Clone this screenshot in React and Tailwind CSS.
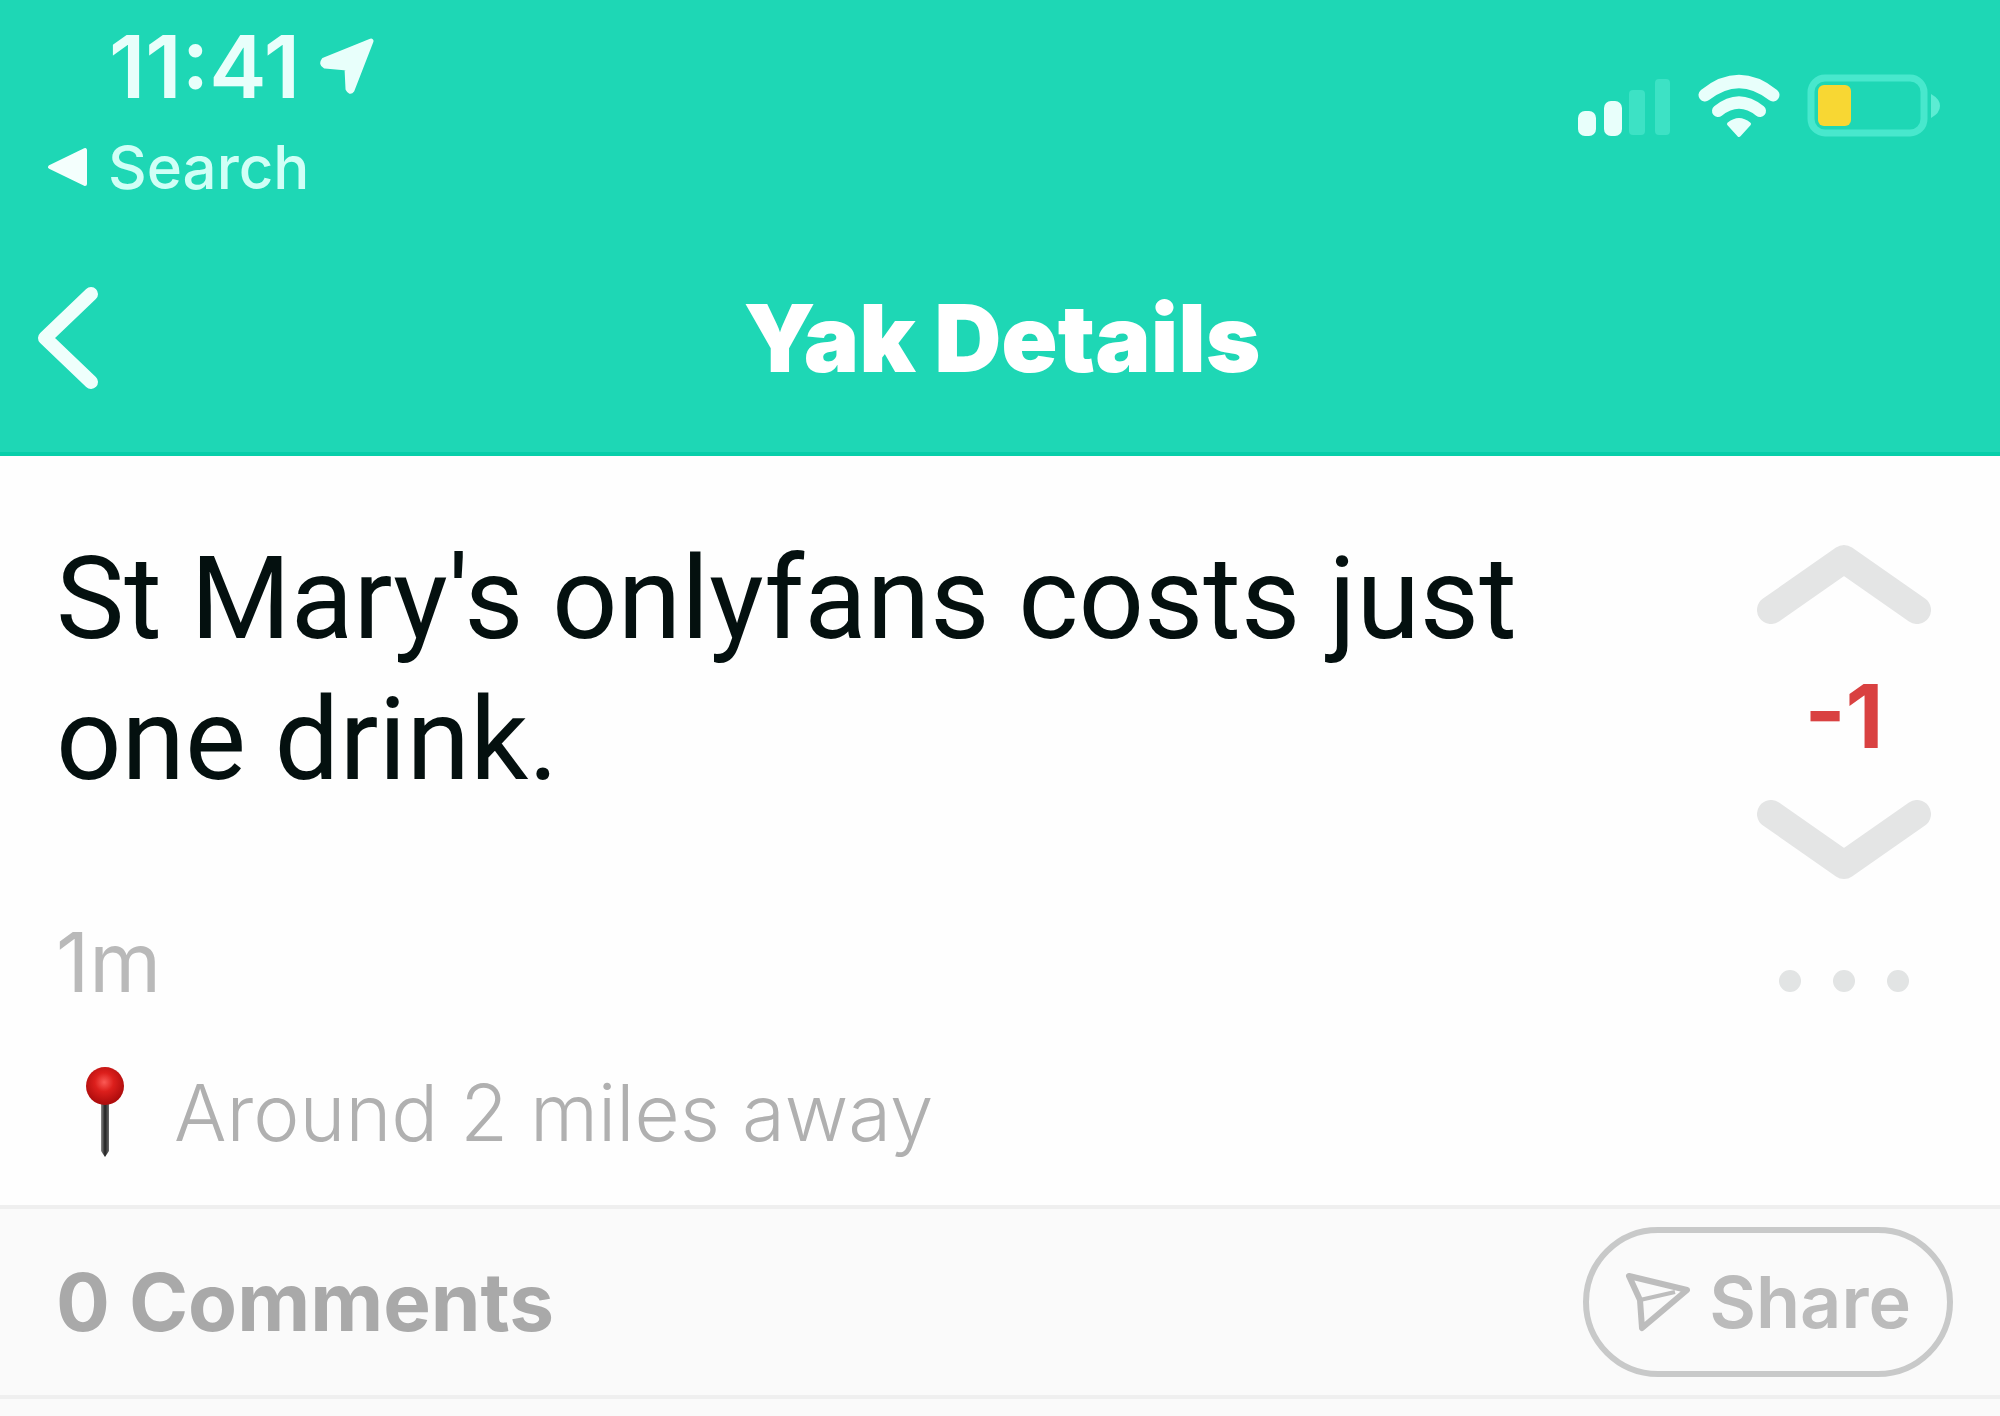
const SIGNAL_BARS = [
  { x: 1, y: 35, width: 18, height: 25, active: true },
  { x: 27, y: 25, width: 18, height: 35, active: true },
  { x: 52, y: 14, width: 16, height: 45, active: false },
  { x: 78, y: 3, width: 15, height: 56, active: false },
];

function SignalIcon() {
  return (
    <svg className="h-[60px] w-[94px]" viewBox="0 0 94 60" aria-hidden="true">
      {SIGNAL_BARS.map((bar) => (
        <rect
          key={bar.x}
          x={bar.x}
          y={bar.y}
          width={bar.width}
          height={bar.height}
          rx={bar.active ? 7 : 4}
          fill={bar.active ? "#e8fffb" : "#3de2c5"}
        />
      ))}
    </svg>
  );
}

function WifiIcon() {
  return (
    <svg className="h-[64px] w-[84px]" viewBox="0 0 84 64" fill="none" aria-hidden="true">
      <path d="M8 21 Q42 -6 76 21" stroke="#e8fffb" strokeWidth="13" strokeLinecap="round" />
      <path d="M21 37 Q42 20 63 37" stroke="#e8fffb" strokeWidth="12" strokeLinecap="round" />
      <path d="M32 50 Q42 42 52 50 L42 61 Z" fill="#e8fffb" stroke="#e8fffb" strokeWidth="4" strokeLinejoin="round" />
    </svg>
  );
}

function BatteryIcon() {
  return (
    <svg className="h-[66px] w-[134px]" viewBox="0 0 134 66" fill="none" aria-hidden="true">
      <rect x="4" y="5" width="113" height="55" rx="14" stroke="#48e8cd" strokeWidth="7" />
      <rect x="11" y="12" width="33" height="41" rx="6" fill="#f8d733" />
      <path d="M124 21 Q133 26 133 33 Q133 40 124 45 Z" fill="#5cecd3" />
    </svg>
  );
}

function StatusBar() {
  return (
    <div className="flex items-start justify-between pl-[47px] pr-[59px] pt-4">
      <div>
        <div className="flex h-[102px] items-center gap-5 pl-[62px] text-[#e8fffb]">
          <span className="text-[86px] leading-none font-semibold">11:41</span>
          <svg className="h-[58px] w-[56px]" viewBox="0 0 56 58" aria-hidden="true">
            <path
              d="M4 22 L51 3 L32 52 Q30 55 28 51 L27 30 L5 28 Q1 26 4 22 Z"
              fill="currentColor"
              stroke="currentColor"
              strokeWidth="5"
              strokeLinejoin="round"
            />
          </svg>
        </div>
        <a href="#search" className="flex h-[98px] items-center gap-5 text-[#d0fff6]">
          <svg className="h-[40px] w-[41px]" viewBox="0 0 41 40" aria-hidden="true">
            <path d="M3 20 L38 3 V37 Z" fill="#f4fffd" stroke="#f4fffd" strokeWidth="4" strokeLinejoin="round" />
          </svg>
          <span className="text-[60px] leading-none font-medium">Search</span>
        </a>
      </div>
      <div className="flex items-center gap-[26px] pt-[57px]">
        <SignalIcon />
        <WifiIcon />
        <BatteryIcon />
      </div>
    </div>
  );
}

function NavBar() {
  return (
    <nav className="grid h-[236px] grid-cols-[1fr_auto_1fr] items-center pt-2 pr-8 pl-9">
      <button type="button" aria-label="Back" className="w-16">
        <svg className="h-[104px] w-[64px]" viewBox="0 0 64 104" fill="none" aria-hidden="true">
          <path
            d="M55 8 L9 52 L55 96"
            stroke="#effffc"
            strokeWidth="14"
            strokeLinecap="round"
            strokeLinejoin="round"
          />
        </svg>
      </button>
      <h1 className="text-[93px] leading-none font-black text-white">Yak Details</h1>
    </nav>
  );
}

function VoteChevron({ down }) {
  return (
    <svg className="h-[80px] w-[174px]" viewBox="0 0 174 80" fill="none" aria-hidden="true">
      <path
        d={down ? "M14 14 L87 65 L160 14" : "M14 66 L87 15 L160 66"}
        stroke="#e4e5e5"
        strokeWidth="28"
        strokeLinecap="round"
        strokeLinejoin="round"
      />
    </svg>
  );
}

function VoteColumn({ score }) {
  return (
    <div className="flex shrink-0 flex-col items-center pt-4">
      <button type="button" aria-label="Upvote">
        <VoteChevron />
      </button>
      <span className="pt-11 pb-9 text-[88px] leading-[96px] font-bold text-[#d94141]">{score}</span>
      <button type="button" aria-label="Downvote">
        <VoteChevron down />
      </button>
      <button type="button" aria-label="More options" className="mt-[90px] flex gap-8">
        <span className="size-[22px] rounded-full bg-[#e2e4e4]" />
        <span className="size-[22px] rounded-full bg-[#e2e4e4]" />
        <span className="size-[22px] rounded-full bg-[#e2e4e4]" />
      </button>
    </div>
  );
}

function PinIcon() {
  return (
    <svg className="h-[96px] w-[42px]" viewBox="0 0 42 96" aria-hidden="true">
      <defs>
        <radialGradient id="pin-head" cx="0.48" cy="0.4" r="0.55">
          <stop offset="0" stopColor="#fb5a55" />
          <stop offset="0.45" stopColor="#dc1f1c" />
          <stop offset="1" stopColor="#b00d0d" />
        </radialGradient>
        <linearGradient id="pin-needle">
          <stop offset="0" stopColor="#8a8a8a" />
          <stop offset="0.5" stopColor="#222222" />
          <stop offset="1" stopColor="#6a6a6a" />
        </linearGradient>
      </defs>
      <path d="M17 38 H25 V86 L21 92 L17 86 Z" fill="url(#pin-needle)" />
      <circle cx="21" cy="21" r="19" fill="url(#pin-head)" />
    </svg>
  );
}

function ShareIcon() {
  return (
    <svg
      className="h-[60px] w-[66px]"
      viewBox="0 0 66 60"
      fill="none"
      stroke="#bdbdbd"
      strokeLinejoin="round"
      aria-hidden="true"
    >
      <path d="M4 4 L62 18 L17 56 L15 28 Z" strokeWidth="6" />
      <path d="M15 28 L50 20" strokeWidth="4" />
    </svg>
  );
}

export default function App() {
  return (
    <div className="min-h-screen bg-[#fafafa] font-['Inter',sans-serif]">
      <header className="border-b-4 border-[#08cfaa] bg-[#1ed7b5]">
        <StatusBar />
        <NavBar />
      </header>

      <main>
        <article className="flex justify-between bg-[#fefefe] pt-[72px] pr-[69px] pb-[42px] pl-[56px]">
          <div className="max-w-[1540px]">
            <p className="font-['Roboto',sans-serif] text-[115px] leading-[141px] text-[#04100f]">
              St Mary's onlyfans costs just one drink.
            </p>
            <p className="mt-[103px] text-[82px] leading-[100px] text-[#b9b9b9]">1m</p>
            <div className="mt-[50px] flex h-[100px] items-center gap-[48px] pl-[28px]">
              <PinIcon />
              <span className="text-[78px] leading-[100px] font-light text-[#b0b0b0]">
                Around 2 miles away
              </span>
            </div>
          </div>
          <VoteColumn score={-1} />
        </article>

        <section className="flex h-[190px] items-center justify-between border-t-4 border-[#efefef] pr-[47px] pl-[56px]">
          <h2 className="text-[80px] leading-none font-bold text-[#a9a9a9]">0 Comments</h2>
          <button
            type="button"
            className="flex h-[150px] items-center gap-[18px] rounded-full border-6 border-[#c8c9c9] px-9 text-[#bbbbbb]"
          >
            <ShareIcon />
            <span className="text-[72px] leading-none font-semibold">Share</span>
          </button>
        </section>
        <div className="border-t-4 border-[#efefef]" />
      </main>
    </div>
  );
}
